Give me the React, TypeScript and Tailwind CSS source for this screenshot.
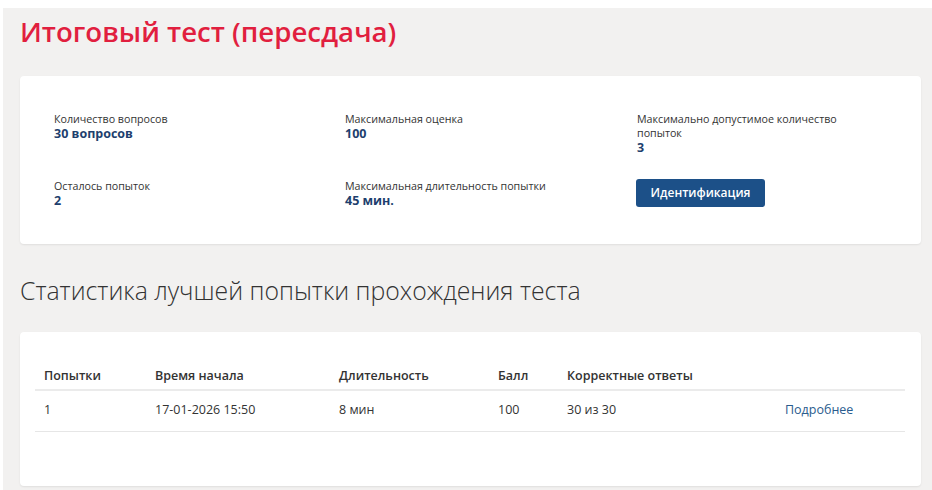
import React from "react";

const body = { fontFamily: '"Open Sans", "Noto Sans", sans-serif' } as const;

function Info({ label, value, narrow }: { label: string; value: string; narrow?: boolean }) {
  return (
    <div className={narrow ? "max-w-[222px]" : ""}>
      <div className="text-[10.7px] leading-[14px] text-[#333333]">{label}</div>
      <div className="text-[12.5px] leading-[15px] font-bold text-[#1e3f6e]">{value}</div>
    </div>
  );
}

export default function App() {
  const rows = [["1", "17-01-2026 15:50", "8 мин", "100", "30 из 30"]];
  return (
    <div className="bg-white pt-[8px] pl-[3px] min-h-[490px]" style={body}>
      <div className="bg-[#f2f1f0] pl-[17px] pr-[11px] pb-[4px]">
        <h1 className="text-[27.6px] leading-[46px] font-semibold text-[#e11f3f]">
          Итоговый тест (пересдача)
        </h1>

        <div className="mt-[22px] bg-white rounded-[4px] shadow-[0_1px_2px_rgba(0,0,0,0.08)] h-[168px] pl-[34px] pt-[36px]">
          <div className="grid grid-cols-[291px_292px_1fr] gap-y-[24px]">
            <Info label="Количество вопросов" value="30 вопросов" />
            <Info label="Максимальная оценка" value="100" />
            <Info label="Максимально допустимое количество попыток" value="3" narrow />
            <Info label="Осталось попыток" value="2" />
            <Info label="Максимальная длительность попытки" value="45 мин." />
            <div>
              <button className="h-[28px] w-[129px] -ml-[1px] rounded-[3px] bg-[#1c5088] text-white text-[12px] font-semibold">
                Идентификация
              </button>
            </div>
          </div>
        </div>

        <h2 className="mt-[31px] text-[24.8px] leading-[30px] text-[#333333] font-light">
          Статистика лучшей попытки прохождения теста
        </h2>

        <div className="mt-[27px] bg-white rounded-[4px] shadow-[0_1px_2px_rgba(0,0,0,0.08)] h-[154px] px-[15px] pt-[31px]">
          <table className="w-[870px] border-collapse text-[12.5px] text-[#333333]">
            <thead>
              <tr className="border-b-2 border-[#ebebeb]">
                <th className="text-left font-semibold pl-[9px] h-[27px] w-[120px]">Попытки</th>
                <th className="text-left font-semibold w-[184px]">Время начала</th>
                <th className="text-left font-semibold w-[159px]">Длительность</th>
                <th className="text-left font-semibold w-[69px]">Балл</th>
                <th className="text-left font-semibold w-[218px]">Корректные ответы</th>
                <th></th>
              </tr>
            </thead>
            <tbody>
              {rows.map((r) => (
                <tr key={r[0]} className="border-b border-[#e6e6e6]">
                  <td className="pl-[9px] h-[41px]">{r[0]}</td>
                  <td>{r[1]}</td>
                  <td>{r[2]}</td>
                  <td>{r[3]}</td>
                  <td>{r[4]}</td>
                  <td className="text-[#2a5c8e]">Подробнее</td>
                </tr>
              ))}
            </tbody>
          </table>
        </div>
      </div>
    </div>
  );
}
